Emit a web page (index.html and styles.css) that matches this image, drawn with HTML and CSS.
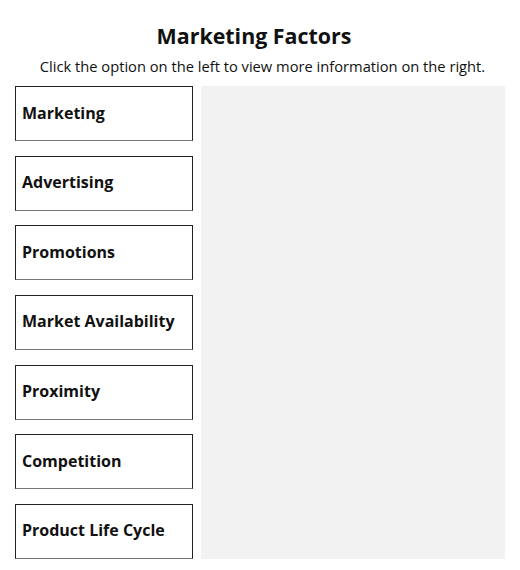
FILE: index.html
```html
<!DOCTYPE html>
<html>
<head>
<meta charset="utf-8">
<link rel="stylesheet" href="styles.css">
</head>
<body>
<div class="page">
  <h1 class="title">Marketing Factors</h1>
  <p class="subtitle">Click the option on the left to view more information on the right.</p>
  <div class="main">
    <div class="options">
      <button class="opt">Marketing</button>
      <button class="opt">Advertising</button>
      <button class="opt">Promotions</button>
      <button class="opt">Market Availability</button>
      <button class="opt">Proximity</button>
      <button class="opt">Competition</button>
      <button class="opt">Product Life Cycle</button>
    </div>
    <div class="panel"></div>
  </div>
</div>
</body>
</html>
```
FILE: styles.css
```css
html, body {
  margin: 0;
  padding: 0;
  background: #ffffff;
}
body {
  font-family: "Open Sans", "Liberation Sans", sans-serif;
  color: #111111;
}
.page {
  padding: 20px 15px 0 15px;
  width: 490px;
}
.title {
  margin: 0;
  padding-right: 12px;
  font-size: 21.4px;
  font-weight: 700;
  line-height: 32px;
  text-align: center;
}
.subtitle {
  margin: 1px 0 0 0;
  font-size: 14.7px;
  line-height: 26px;
  text-align: center;
  padding-left: 5px;
}
.main {
  display: flex;
  gap: 8px;
  margin-top: 7px;
}
.options {
  display: flex;
  flex-direction: column;
  gap: 14.67px;
  width: 178px;
}
.opt {
  height: 55px;
  box-sizing: border-box;
  border: 1px solid #222222;
  border-bottom-color: #777777;
  background: #ffffff;
  text-align: left;
  padding: 0 6px 2px 6px;
  font-family: "Open Sans", "Liberation Sans", sans-serif;
  font-size: 16px;
  font-weight: 700;
  color: #111111;
}
.panel {
  flex: 1;
  background: #f2f2f2;
}
```
